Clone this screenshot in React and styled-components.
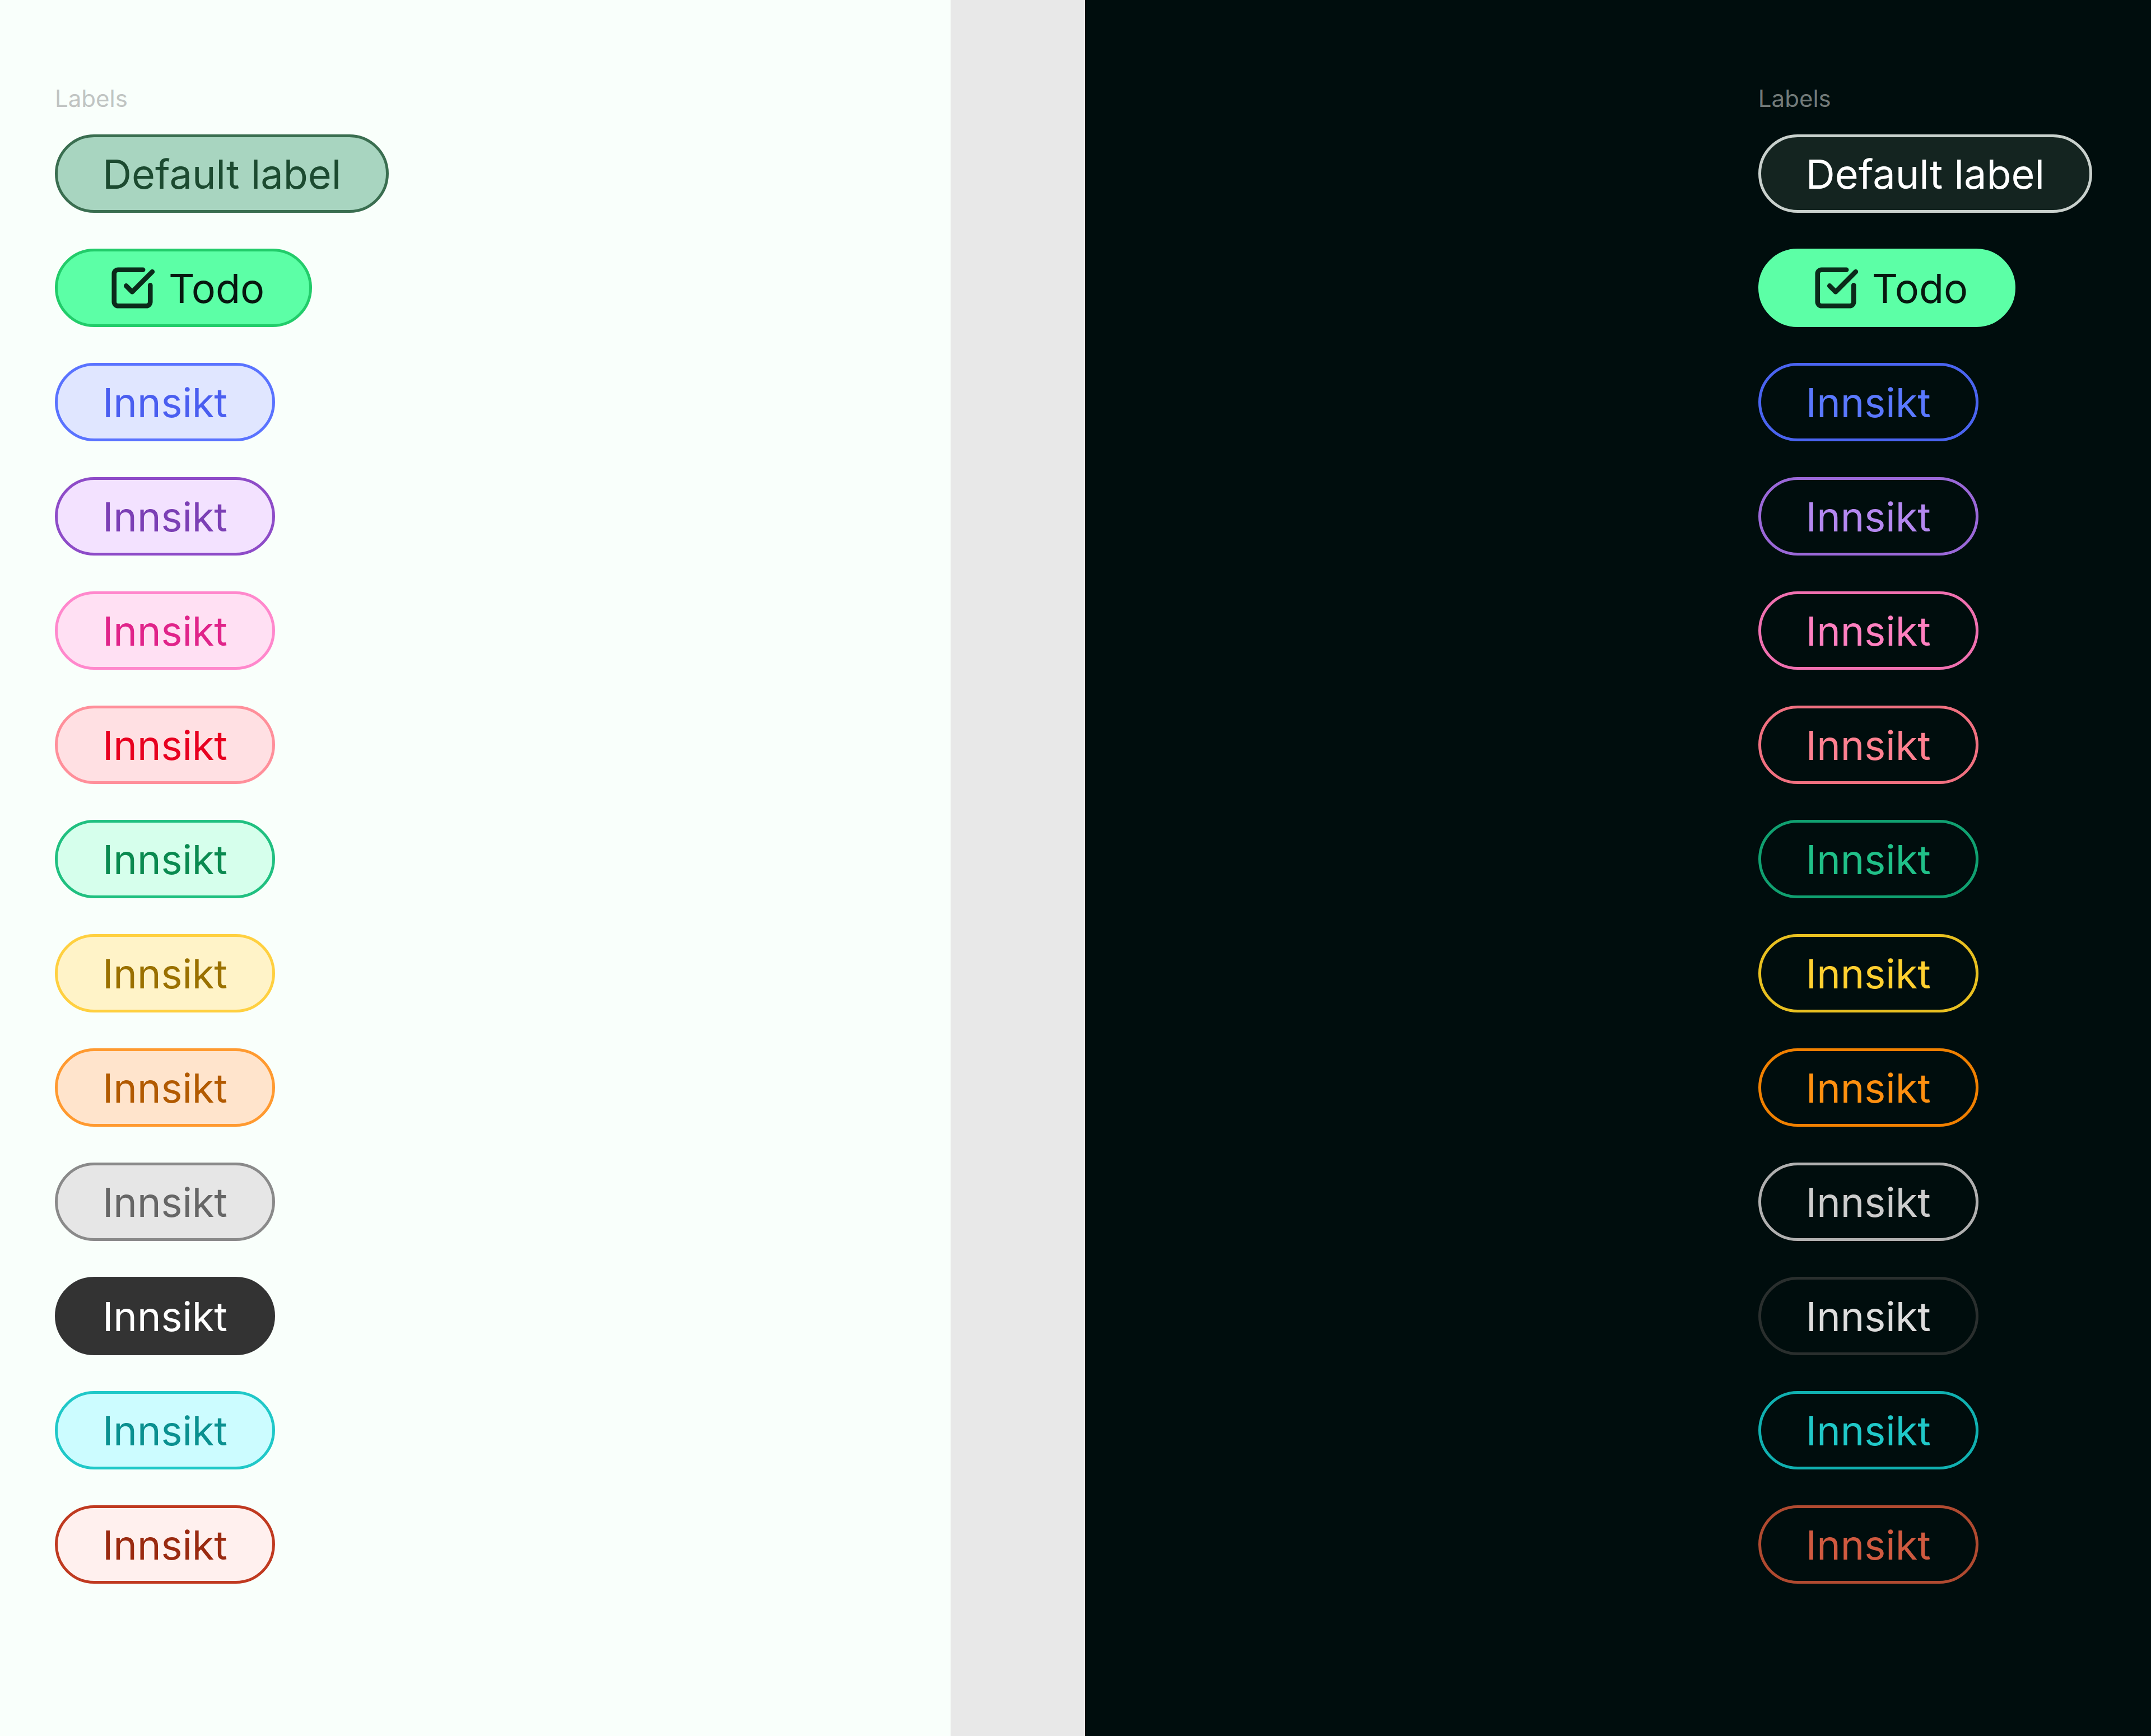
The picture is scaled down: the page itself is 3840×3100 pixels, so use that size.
import React from 'react';
import styled, { createGlobalStyle } from 'styled-components';
import { SquareCheckBig } from 'lucide-react';

const Global = createGlobalStyle`
  body { margin: 0; font-family: Inter, "Noto Sans", sans-serif; }
`;

const light = [
  ['#e0e6ff', '#5a73ff', '#4a5ef0'],
  ['#f3e2ff', '#8e4cc8', '#7b3fb5'],
  ['#ffe0f3', '#ff88cc', '#e0248a'],
  ['#ffe0e3', '#ff8f9a', '#e80020'],
  ['#d6ffec', '#20c080', '#0a8a50'],
  ['#fff3c8', '#ffd040', '#9a7000'],
  ['#ffe4cc', '#ff9a30', '#b25a00'],
  ['#e6e6e6', '#8a8a8a', '#666666'],
  ['#333333', '#333333', '#ffffff'],
  ['#ccfcff', '#20c8c8', '#0a9090'],
  ['#fff0ee', '#c03a20', '#9a2a10'],
];

const dark = [
  ['transparent', '#4a64f0', '#5a78ff'],
  ['transparent', '#9a68d8', '#b488f0'],
  ['transparent', '#f070b0', '#ff80c0'],
  ['transparent', '#f07080', '#ff8090'],
  ['transparent', '#10a070', '#20c088'],
  ['transparent', '#e8c020', '#ffd030'],
  ['transparent', '#f08000', '#ff9010'],
  ['transparent', '#b0b0b0', '#cccccc'],
  ['transparent', '#2a2f2e', '#dddddd'],
  ['transparent', '#10b0b0', '#20c8c8'],
  ['transparent', '#b04a30', '#d05a40'],
];

const Page = styled.div`
  display: flex;
  width: 3840px;
  height: 3100px;
  background: #e8e8e8;
`;

const Panel = styled.div`
  width: ${({ w }) => w}px;
  background: ${({ bg }) => bg};
  display: flex;
  justify-content: ${({ end }) => (end ? 'flex-end' : 'flex-start')};
  padding: 151px ${({ end }) => (end ? '105px' : '0')} 0 ${({ end }) => (end ? '0' : '98px')};
  box-sizing: border-box;
`;

const Gap = styled.div`
  width: 240px;
`;

const Column = styled.div`
  display: flex;
  flex-direction: column;
  align-items: flex-start;
  gap: 64px;
`;

const Title = styled.div`
  font-size: 42px;
  line-height: 50px;
  color: ${({ c }) => c};
  margin-bottom: -25px;
`;

const Pill = styled.div`
  display: flex;
  align-items: center;
  gap: 22px;
  box-sizing: border-box;
  height: 140px;
  padding: 0 80px;
  padding-left: ${({ icon }) => (icon ? '90px' : '80px')};
  border-radius: 70px;
  border: 5px solid ${({ bd }) => bd};
  background: ${({ bg }) => bg};
  color: ${({ fg }) => fg};
  font-size: 72px;
  white-space: nowrap;
`;

const Set = ({ d, title, def, palette }) => (
  <Column>
    <Title c={title}>Labels</Title>
    <Pill bg={def[0]} bd={def[1]} fg={def[2]}>Default label</Pill>
    <Pill icon bg="#5cffa6" bd={d ? '#5cffa6' : '#22cc6a'} fg="#07170f">
      <SquareCheckBig size={86} strokeWidth={2.4} color="#0b2a1a" />
      Todo
    </Pill>
    {palette.map(([bg, bd, fg], i) => (
      <Pill key={i} bg={bg} bd={bd} fg={fg}>Innsikt</Pill>
    ))}
  </Column>
);

export default function App() {
  return (
    <Page>
      <Global />
      <Panel w={1697} bg="#f9fffb">
        <Set title="#c0c4c2" def={['#a8d5c0', '#3a6e50', '#1c4a30']} palette={light} />
      </Panel>
      <Gap />
      <Panel w={1903} bg="#000d0d" end>
        <Set d title="#737b79" def={['#142420', '#c8d0cc', '#ffffff']} palette={dark} />
      </Panel>
    </Page>
  );
}
